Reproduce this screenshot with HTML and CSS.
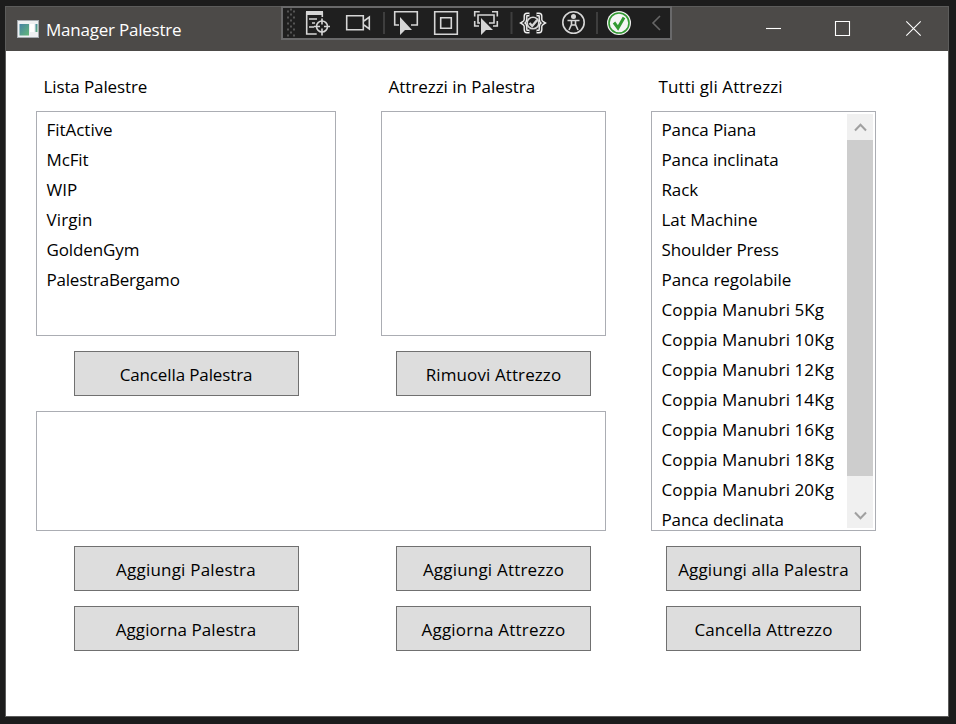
FILE: index.html
```html
<!DOCTYPE html>
<html lang="it">
<head>
<meta charset="utf-8">
<title>Manager Palestre</title>
<link rel="stylesheet" href="styles.css">
</head>
<body>
<div class="window">
  <header class="titlebar">
    <svg class="app-icon" width="22" height="19" viewBox="0 0 22 19">
      <defs><linearGradient id="g" x1="0" y1="0" x2="1" y2="1"><stop offset="0" stop-color="#4682a5"/><stop offset="1" stop-color="#63b878"/></linearGradient></defs>
      <rect width="22" height="18" fill="#eef0f2"/><path d="M0 .5h22M.5 0v18M21.500 0v18M0 17.500h22" stroke="#a5abb0" fill="none"/>
      <rect x="2.500" y="4" width="9.500" height="11.500" fill="url(#g)"/><rect x="13" y="4" width="4" height="8" fill="#fff"/><rect x="18.500" y="4" width="2" height="8" fill="url(#g)"/>
    </svg>
    <h1 class="title">Manager Palestre</h1>
    <div class="controls">
      <svg width="70" height="44" viewBox="0 0 70 44"><path d="M28 21.500h15"/></svg>
      <svg width="70" height="44" viewBox="0 0 70 44"><path d="M27.500 14.500h14v14h-14z"/></svg>
      <svg width="70" height="44" viewBox="0 0 70 44"><path d="M28.300 14.300l14.400 14.400M42.700 14.300l-14.400 14.400"/></svg>
    </div>
  </header>

  <main class="content">
    <h2 class="label c1">Lista Palestre</h2>
    <h2 class="label c2 loose">Attrezzi in Palestra</h2>
    <h2 class="label c3 looser">Tutti gli Attrezzi</h2>
    <ul class="list c1">
      <li class="loose">FitActive</li><li>McFit</li><li class="loose">WIP</li><li class="looser">Virgin</li><li>GoldenGym</li><li class="tight">PalestraBergamo</li>
    </ul>
    <ul class="list c2"></ul>
    <div class="list scroll-list">
      <ul class="items">
        <li>Panca Piana</li><li>Panca inclinata</li><li>Rack</li><li class="loose">Lat Machine</li><li>Shoulder Press</li><li class="loose">Panca regolabile</li><li class="looser">Coppia Manubri 5Kg</li><li class="looser">Coppia Manubri 10Kg</li><li class="looser">Coppia Manubri 12Kg</li><li class="looser">Coppia Manubri 14Kg</li><li class="looser">Coppia Manubri 16Kg</li><li class="looser">Coppia Manubri 18Kg</li><li class="looser">Coppia Manubri 20Kg</li><li class="last">Panca declinata</li>
      </ul>
      <div class="scrollbar">
        <svg width="26" height="26" viewBox="0 0 26 26"><path d="M8 16.500l5.500-5.800 5.500 5.800"/></svg>
        <div class="thumb"></div>
        <svg width="26" height="26" viewBox="0 0 26 26"><path d="M8 10.500l5.500 5.800 5.500-5.800"/></svg>
      </div>
    </div>
    <button class="btn c1 r3">Cancella Palestra</button>
    <button class="btn narrow c2 r3 looser">Rimuovi Attrezzo</button>
    <div class="details"></div>
    <button class="btn c1 r5 loosest">Aggiungi Palestra</button>
    <button class="btn narrow c2 r5 loosest">Aggiungi Attrezzo</button>
    <button class="btn narrow c3 r5 looser">Aggiungi alla Palestra</button>
    <button class="btn c1 r6 looser">Aggiorna Palestra</button>
    <button class="btn narrow c2 r6 loosest">Aggiorna Attrezzo</button>
    <button class="btn narrow c3 r6 looser">Cancella Attrezzo</button>
  </main>
</div>

<div class="toolbar">
  <svg class="grip" width="15" height="30" viewBox="0 0 15 30"><path d="M4 3.500h8M4 9.500h8M4 15.500h8M4 21.500h8M4 27.500h8" stroke-dasharray="2 4"/><path d="M7 6.500h5M7 12.500h5M7 18.500h5M7 24.500h5M7 1.500h5" stroke-dasharray="2 6"/></svg>
  <svg width="40" height="30" viewBox="0 0 40 30"><path class="fill" d="M8 3h17v4H8z"/><path d="M8.700 4v22h10M24.300 4v5M11 11h8M14 15h3M11 19h5"/><circle cx="24" cy="18.500" r="5.500"/><path d="M24 10.500v6M24 20.500v7M16 18.500h6M26 18.500h6"/></svg>
  <svg width="40" height="30" viewBox="0 0 40 30"><path d="M8.700 7.700h16.600v14H8.700zM26 13l5.300-4v12L26 17"/></svg>
  <svg width="8" height="30" viewBox="0 0 8 30"><path class="sep" d="M6 4v22"/></svg>
  <svg width="40" height="30" viewBox="0 0 40 30"><path d="M13 17H8.700V3.700h22.600V17H25"/><path class="fill" d="M14 9v18l5-5h7z"/></svg>
  <svg width="40" height="30" viewBox="0 0 40 30"><path d="M8.700 3.700h22.600v22.600H8.700zM14.700 9.700h10.600v10.600H14.700z"/></svg>
  <svg width="40" height="30" viewBox="0 0 40 30"><path d="M8.700 8.500V3.700h5M26 3.700h5.300v4.800M8.700 13v5H13M31.300 13v5H27M14 15h-2V7h16v8h-5"/><path class="fill" d="M15 10v17l5-5h7z"/></svg>
  <svg width="7" height="30" viewBox="0 0 7 30"><path class="sep" d="M5.500 4v22"/></svg>
  <svg width="40" height="30" viewBox="0 0 40 30"><path class="braces" d="M16.500 6.500h-2.500q-1.500 0-1.500 1.500v3.500q0 2-2.500 3.500 2.500 1.500 2.500 3.500v3q0 2 1.500 2h2.500M23.500 6.500h2.500q1.500 0 1.500 1.500v3.500q0 2 2.500 3.500-2.500 1.500-2.500 3.500v3q0 2-1.500 2h-2.500"/><path class="braces-core" d="M16.500 6.500h-2.500q-1.500 0-1.500 1.500v3.500q0 2-2.500 3.500 2.500 1.500 2.500 3.500v3q0 2 1.500 2h2.500M23.500 6.500h2.500q1.500 0 1.500 1.500v3.500q0 2 2.500 3.500-2.500 1.500-2.500 3.500v3q0 2-1.500 2h-2.500"/><circle class="core" cx="20" cy="15" r="5.800"/><path class="bold" d="M16.500 15l2.700 3 5-6"/></svg>
  <svg width="40" height="30" viewBox="0 0 40 30"><circle cx="20.500" cy="14.500" r="10.700"/><circle class="fill" cx="20.500" cy="8.500" r="2.500"/><path d="M14.500 12.500h4v4l-2.500 5.500M26.500 12.500h-4v4l2.500 5.500M18.500 12.500h4M18.500 17h4"/></svg>
  <svg width="6" height="30" viewBox="0 0 6 30"><path class="sep" d="M4 4v22"/></svg>
  <svg class="status" width="40" height="30" viewBox="0 0 40 30"><circle class="disc" cx="20" cy="15" r="12"/><circle cx="20" cy="15" r="10"/><path class="tick" d="M15 14.500l4 5.500 6-10.500"/></svg>
  <svg width="31" height="30" viewBox="0 0 31 30"><path class="chevron" d="M21 8l-7 7 7 7"/></svg>
</div>
</body>
</html>
```
FILE: styles.css
```css
* { box-sizing: border-box; }
body {
  margin: 0;
  width: 956px;
  height: 724px;
  padding: 6px 0 0 5px;
  overflow: hidden;
  background: #1c1c1c;
  color: #000;
  font: 17px/30px "Open Sans", "Noto Sans", sans-serif;
  letter-spacing: -0.12px;
}
svg { display: block; flex: none; }
h1, h2 { margin: 0; font: inherit; }
ul { list-style: none; margin: 0; padding: 0; }

.window {
  width: 944px;
  height: 711px;
  border: 1px solid #5c5c5b;
  background: #fff;
}
.titlebar {
  display: flex;
  align-items: center;
  height: 44px;
  padding-left: 11px;
  background: #4c4a48;
  color: #fff;
}
.title { margin: 1px 0 0 7px; letter-spacing: -0.22px; }
.controls { display: flex; margin-left: auto; }
.controls svg { fill: none; stroke: #fff; stroke-width: 1.1; }

.content {
  display: grid;
  grid-template-columns: 300px 225px 225px;
  grid-template-rows: 45px 225px 45px 120px 45px 45px;
  gap: 15px 45px;
  padding-left: 30px;
}
.c1 { grid-column: 1; }
.c2 { grid-column: 2; }
.c3 { grid-column: 3; }
.r3 { grid-row: 3; }
.r5 { grid-row: 5; }
.r6 { grid-row: 6; }
.label { grid-row: 1; padding: 21px 0 0 7.5px; white-space: nowrap; }
.list { grid-row: 2; border: 1px solid #abadb3; padding: 3px 0 0 9.5px; }
.scroll-list {
  grid-column: 3;
  grid-row: 2 / 5;
  display: flex;
  justify-content: space-between;
  padding: 2px 2px 2px 9.5px;
  overflow: hidden;
}
.items { padding-top: 1px; white-space: nowrap; }
.last { padding-top: 7px; line-height: 16px; }
.scrollbar {
  display: flex;
  flex-direction: column;
  flex: none;
  width: 26px;
  background: #f0f0f0;
}
.scrollbar svg { fill: none; stroke: #a0a0a0; stroke-width: 2; }
.thumb { height: 336px; margin-bottom: auto; background: #cdcdcd; }
.details { grid-column: 1 / 3; grid-row: 4; border: 1px solid #abadb3; }
.btn {
  justify-self: center;
  width: 225px;
  padding: 2px 0 0;
  border: 1px solid #707070;
  background: #ddd;
  color: #000;
  font: inherit;
  letter-spacing: inherit;
  white-space: nowrap;
}
.narrow { width: 195px; }
.tight { letter-spacing: -0.2px; }
.loose { letter-spacing: -0.03px; }
.looser { letter-spacing: 0.1px; }
.loosest { letter-spacing: 0.2px; }

.toolbar {
  position: absolute;
  left: 281px;
  top: 6px;
  display: flex;
  width: 391px;
  height: 34px;
  border: 2px solid #69696a;
  background: #1f1f1f;
}
.toolbar svg { fill: none; stroke: #d6d6d6; stroke-width: 1.6; }
.toolbar .fill { fill: #d6d6d6; stroke: none; }
.toolbar .sep { stroke: #3e3e3e; stroke-width: 2; }
.toolbar .grip { stroke: #555; stroke-width: 2; }
.braces { stroke: #f0f0f0; stroke-width: 4; }
.braces-core { stroke: #333; stroke-width: 1.2; }
.core { fill: #1f1f1f; }
.bold { stroke-width: 2.4; }
.status .disc { fill: #f5f5f5; stroke: none; }
.toolbar .status { stroke: #329932; }
.tick { stroke-width: 3; }
.toolbar .chevron { stroke: #666; }
```
